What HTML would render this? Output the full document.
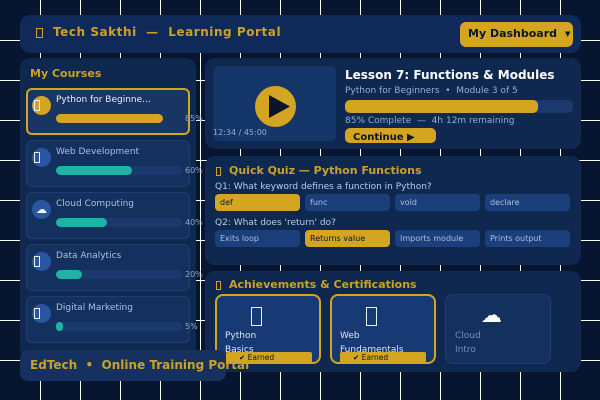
<!DOCTYPE html>
<html><head><meta charset="utf-8"><style>
*{box-sizing:border-box;margin:0;padding:0}
html,body{width:600px;height:400px;overflow:hidden}
body{position:relative;font-family:"DejaVu Sans",sans-serif;background:#071530}
#gv{position:absolute;left:40px;top:0;width:560px;height:400px;background-image:linear-gradient(to right,#fff 0,#fff 1px,transparent 1px);background-size:40px 40px}
#gh{position:absolute;left:0;top:40px;width:600px;height:360px;background-image:linear-gradient(to bottom,#fff 0,#fff 1px,transparent 1px);background-size:40px 40px}
.a{position:absolute;white-space:nowrap}
.p{position:absolute;background:#0f2850;border-radius:10px}
.tf{position:absolute;border:1px solid #c9a227}
.tw{position:absolute;border:1px solid #e8f0fa}
.ci{position:absolute;left:26px;width:164px;height:47px;background:#14305f;border:1px solid #1e3d70;border-radius:6px}
.ci.on{border:2px solid #d4a520;background:#183564}
.ic{position:absolute;left:32px;width:19px;height:19px;border-radius:50%;background:#2a55a0;color:#fff;font-size:11px;text-align:center;line-height:19px}
.t{position:absolute;left:56px;font-size:9px;color:#a8c0e0;white-space:nowrap}
.tr{position:absolute;left:56px;width:126px;height:9px;border-radius:5px;background:#1a3a6e}
.fl{position:absolute;left:56px;height:9px;border-radius:5px;background:#20b2a5}
.pc{position:absolute;left:185px;font-size:8px;color:#8fa8c8}
.o{position:absolute;width:85px;height:17px;border-radius:4px;background:#1a3f7a;color:#a8c0e0;font-size:8px;line-height:17px;padding-left:5px}
.o.s{background:#d4a520;color:#0a1628}
.c{position:absolute;top:294px;width:106px;height:70px;border-radius:8px;background:#173a75;border:2px solid #d4a520;overflow:hidden}
.nm{position:absolute;font-size:9px;line-height:14px;color:#d8e4f4}
.bd{position:absolute;width:86px;height:11px;background:#d4a520;border-radius:2px;font-size:7.5px;color:#0a1628;line-height:12px;padding-left:13px}
</style></head><body>
<div id="gv"></div><div id="gh"></div>

<div class="p" style="left:20px;top:15px;width:561px;height:38px;background:#0f2a58"></div>
<div class="tf" style="left:36px;top:28px;width:7px;height:10px"></div>
<div class="a" style="left:53px;top:25px;font-size:12px;font-weight:bold;letter-spacing:.55px;color:#c9a227">Tech Sakthi&nbsp; —&nbsp; Learning Portal</div>
<div class="a" style="left:460px;top:22px;width:113px;height:25px;background:#d4a520;border-radius:6px"></div>
<div class="a" style="left:468px;top:27px;font-size:11px;font-weight:bold;color:#0a1628">My Dashboard</div>
<div class="a" style="left:565px;top:30px;font-size:7px;color:#0a1628">▼</div>

<div class="p" style="left:20px;top:58px;width:176px;height:300px"></div>
<div class="a" style="left:30px;top:67px;font-size:11px;font-weight:bold;color:#c9a227">My Courses</div>

<div class="ci on" style="top:88px"></div>
<div class="ic" style="top:96px;background:#d4a520"></div>
<div class="tw" style="left:34px;top:100px;width:6px;height:11px"></div>
<div class="t" style="top:95px;color:#e8f0fa">Python for Beginne...</div>
<div class="fl" style="top:114px;width:107px;background:#d4a520"></div>
<div class="pc" style="top:114px">85%</div>

<div class="ci" style="top:140px"></div>
<div class="ic" style="top:148px"></div>
<div class="tw" style="left:34px;top:152px;width:6px;height:11px"></div>
<div class="t" style="top:147px">Web Development</div>
<div class="tr" style="top:166px"></div><div class="fl" style="top:166px;width:76px"></div>
<div class="pc" style="top:166px">60%</div>

<div class="ci" style="top:192px"></div>
<div class="ic" style="top:200px">☁&#xFE0E;</div>
<div class="t" style="top:199px">Cloud Computing</div>
<div class="tr" style="top:218px"></div><div class="fl" style="top:218px;width:51px"></div>
<div class="pc" style="top:218px">40%</div>

<div class="ci" style="top:244px"></div>
<div class="ic" style="top:252px"></div>
<div class="tw" style="left:34px;top:256px;width:6px;height:11px"></div>
<div class="t" style="top:251px">Data Analytics</div>
<div class="tr" style="top:270px"></div><div class="fl" style="top:270px;width:26px"></div>
<div class="pc" style="top:270px">20%</div>

<div class="ci" style="top:296px"></div>
<div class="ic" style="top:304px"></div>
<div class="tw" style="left:34px;top:308px;width:6px;height:11px"></div>
<div class="t" style="top:303px">Digital Marketing</div>
<div class="tr" style="top:322px"></div><div class="fl" style="top:322px;width:7px"></div>
<div class="pc" style="top:322px">5%</div>

<div class="p" style="left:205px;top:58px;width:376px;height:91px"></div>
<div class="a" style="left:213px;top:66px;width:123px;height:75px;border-radius:6px;background:#143568"></div>
<div class="a" style="left:255px;top:86px;width:41px;height:41px;border-radius:50%;background:#d4a520"></div>
<svg class="a" style="left:269px;top:95px" width="22" height="24"><path d="M0 0L21 11.5L0 23Z" fill="#0a1628"/></svg>
<div class="a" style="left:213px;top:128px;font-size:8px;color:#8fb0d8">12:34 / 45:00</div>
<div class="a" style="left:345px;top:68px;font-size:12px;font-weight:bold;color:#fff">Lesson 7: Functions &amp; Modules</div>
<div class="a" style="left:345px;top:86px;font-size:9px;color:#8fb0d8">Python for Beginners&nbsp; •&nbsp; Module 3 of 5</div>
<div class="a" style="left:345px;top:100px;width:228px;height:13px;border-radius:5px;background:#1a3a6e"></div>
<div class="a" style="left:345px;top:100px;width:193px;height:13px;border-radius:5px;background:#d4a520"></div>
<div class="a" style="left:345px;top:116px;font-size:9px;color:#8fb0d8">85% Complete&nbsp; —&nbsp; 4h 12m remaining</div>
<div class="a" style="left:345px;top:128px;width:91px;height:15px;border-radius:5px;background:#d4a520"></div>
<div class="a" style="left:353px;top:132px;font-size:10px;font-weight:bold;color:#0a1628">Continue ▶</div>

<div class="p" style="left:205px;top:156px;width:376px;height:109px"></div>
<div class="tf" style="left:216px;top:167px;width:5px;height:9px"></div>
<div class="a" style="left:229px;top:164px;font-size:11px;font-weight:bold;color:#c9a227">Quick Quiz — Python Functions</div>
<div class="a" style="left:215px;top:182px;font-size:9px;color:#b8cce6">Q1: What keyword defines a function in Python?</div>
<div class="o s" style="left:215px;top:194px">def</div>
<div class="o" style="left:305px;top:194px">func</div>
<div class="o" style="left:395px;top:194px">void</div>
<div class="o" style="left:485px;top:194px">declare</div>
<div class="a" style="left:215px;top:218px;font-size:9px;color:#b8cce6">Q2: What does 'return' do?</div>
<div class="o" style="left:215px;top:230px">Exits loop</div>
<div class="o s" style="left:305px;top:230px">Returns value</div>
<div class="o" style="left:395px;top:230px">Imports module</div>
<div class="o" style="left:485px;top:230px">Prints output</div>

<div class="p" style="left:205px;top:271px;width:376px;height:101px"></div>
<div class="tf" style="left:216px;top:281px;width:5px;height:9px"></div>
<div class="a" style="left:229px;top:278px;font-size:11px;font-weight:bold;color:#c9a227">Achievements &amp; Certifications</div>

<div class="c" style="left:215px"></div>
<div class="tw" style="left:251px;top:307px;width:11px;height:19px"></div>
<div class="nm" style="left:225px;top:329px">Python<br>Basics</div>
<div class="bd" style="left:226px;top:352px">✔ Earned</div>

<div class="c" style="left:330px"></div>
<div class="tw" style="left:366px;top:307px;width:11px;height:19px"></div>
<div class="nm" style="left:340px;top:329px">Web<br>Fundamentals</div>
<div class="bd" style="left:340px;top:352px">✔ Earned</div>

<div class="c" style="left:445px;background:#14305f;border:1px solid #1e3d70"></div>
<div class="a" style="left:481px;top:303px;font-size:21px;color:#fff">☁&#xFE0E;</div>
<div class="nm" style="left:455px;top:329px;color:#7090b8">Cloud<br>Intro</div>

<div class="a" style="left:20px;top:350px;width:206px;height:31px;border-radius:8px;background:#16315f"></div>
<div class="a" style="left:30px;top:358px;font-size:12px;font-weight:bold;color:#c9a227">EdTech&nbsp; •&nbsp; Online Training Portal</div>
</body></html>
